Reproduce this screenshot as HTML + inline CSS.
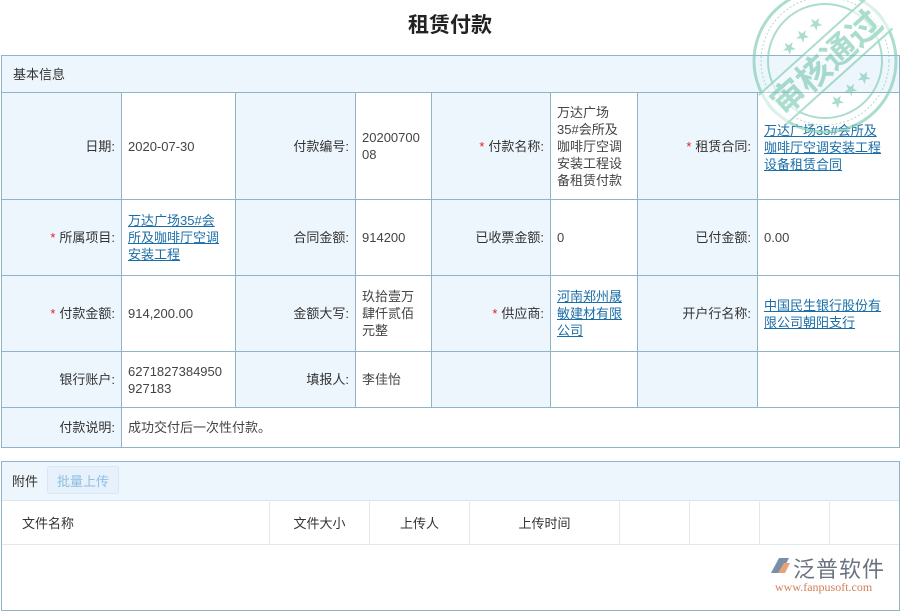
<!DOCTYPE html>
<html><head><meta charset="utf-8"><style>
body{margin:0;width:900px;height:600px;background:#fff;position:relative;overflow:hidden;font-family:"Liberation Sans","Noto Sans CJK SC",sans-serif;font-size:13px;color:#333}
.c{position:absolute;box-sizing:border-box;border:1px solid #8fb3c7;display:flex;align-items:center;line-height:17px}
.l{background:#eef6fd;justify-content:flex-end;padding-right:6px;text-align:right}
.v{background:#fff;padding-left:6px;padding-right:4px;color:#444}
.s{color:#e02020;margin-right:4px}
a{color:#1a6ea8;text-decoration:underline}
.h{position:absolute;top:500px;height:45px;box-sizing:border-box;border-right:1px solid #e3e8ec;display:flex;align-items:center;justify-content:center;font-size:13px}
</style></head><body>
<div style="position:absolute;left:0;top:9px;width:900px;text-align:center;font-size:21px;font-weight:bold;color:#222">租赁付款</div>

<div class="c l" style="left:1px;top:55px;width:899px;height:38px;justify-content:flex-start;padding-left:11px">基本信息</div>

<div class="c l" style="left:1px;top:92px;width:121px;height:108px">日期:</div>
<div class="c v" style="left:121px;top:92px;width:115px;height:108px">2020-07-30</div>
<div class="c l" style="left:235px;top:92px;width:121px;height:108px">付款编号:</div>
<div class="c v" style="left:355px;top:92px;width:77px;height:108px">20200700<br>08</div>
<div class="c l" style="left:431px;top:92px;width:120px;height:108px"><span class="s">*</span>付款名称:</div>
<div class="c v" style="left:550px;top:92px;width:88px;height:108px">万达广场<br>35#会所及<br>咖啡厅空调<br>安装工程设<br>备租赁付款</div>
<div class="c l" style="left:637px;top:92px;width:121px;height:108px"><span class="s">*</span>租赁合同:</div>
<div class="c v" style="left:757px;top:92px;width:143px;height:108px;align-items:flex-start;padding-top:29px"><a>万达广场35#会所及<br>咖啡厅空调安装工程<br>设备租赁合同</a></div>

<div class="c l" style="left:1px;top:199px;width:121px;height:77px"><span class="s">*</span>所属项目:</div>
<div class="c v" style="left:121px;top:199px;width:115px;height:77px"><a>万达广场35#会<br>所及咖啡厅空调<br>安装工程</a></div>
<div class="c l" style="left:235px;top:199px;width:121px;height:77px">合同金额:</div>
<div class="c v" style="left:355px;top:199px;width:77px;height:77px">914200</div>
<div class="c l" style="left:431px;top:199px;width:120px;height:77px">已收票金额:</div>
<div class="c v" style="left:550px;top:199px;width:88px;height:77px">0</div>
<div class="c l" style="left:637px;top:199px;width:121px;height:77px">已付金额:</div>
<div class="c v" style="left:757px;top:199px;width:143px;height:77px">0.00</div>

<div class="c l" style="left:1px;top:275px;width:121px;height:77px"><span class="s">*</span>付款金额:</div>
<div class="c v" style="left:121px;top:275px;width:115px;height:77px">914,200.00</div>
<div class="c l" style="left:235px;top:275px;width:121px;height:77px">金额大写:</div>
<div class="c v" style="left:355px;top:275px;width:77px;height:77px">玖拾壹万<br>肆仟贰佰<br>元整</div>
<div class="c l" style="left:431px;top:275px;width:120px;height:77px"><span class="s">*</span>供应商:</div>
<div class="c v" style="left:550px;top:275px;width:88px;height:77px"><a>河南郑州晟<br>敏建材有限<br>公司</a></div>
<div class="c l" style="left:637px;top:275px;width:121px;height:77px">开户行名称:</div>
<div class="c v" style="left:757px;top:275px;width:143px;height:77px"><a>中国民生银行股份有<br>限公司朝阳支行</a></div>

<div class="c l" style="left:1px;top:351px;width:121px;height:57px">银行账户:</div>
<div class="c v" style="left:121px;top:351px;width:115px;height:57px">6271827384950<br>927183</div>
<div class="c l" style="left:235px;top:351px;width:121px;height:57px">填报人:</div>
<div class="c v" style="left:355px;top:351px;width:77px;height:57px">李佳怡</div>
<div class="c l" style="left:431px;top:351px;width:120px;height:57px"></div>
<div class="c v" style="left:550px;top:351px;width:88px;height:57px"></div>
<div class="c l" style="left:637px;top:351px;width:121px;height:57px"></div>
<div class="c v" style="left:757px;top:351px;width:143px;height:57px"></div>

<div class="c l" style="left:1px;top:407px;width:121px;height:41px">付款说明:</div>
<div class="c v" style="left:121px;top:407px;width:779px;height:41px">成功交付后一次性付款。</div>

<div style="position:absolute;left:1px;top:461px;width:899px;height:150px;box-sizing:border-box;border:1px solid #8fb3c7"></div>
<div style="position:absolute;left:2px;top:462px;width:897px;height:38px;background:#eef6fd;border-bottom:1px solid #dde5eb"></div>
<div style="position:absolute;left:12px;top:471px">附件</div>
<div style="position:absolute;left:47px;top:466px;width:72px;height:28px;box-sizing:border-box;border:1px solid #d6e6f3;border-radius:3px;background:#e6f1fb;color:#8cbfe4;display:flex;align-items:center;justify-content:center">批量上传</div>
<div class="h" style="left:2px;width:268px;justify-content:flex-start;padding-left:20px">文件名称</div>
<div class="h" style="left:270px;width:100px">文件大小</div>
<div class="h" style="left:370px;width:100px">上传人</div>
<div class="h" style="left:470px;width:150px">上传时间</div>
<div class="h" style="left:620px;width:70px"></div>
<div class="h" style="left:690px;width:70px"></div>
<div class="h" style="left:760px;width:70px"></div>
<div style="position:absolute;left:2px;top:544px;width:897px;height:1px;background:#e3e8ec"></div>

<div style="position:absolute;left:769px;top:555px;width:22px;height:22px">
<svg width="22" height="22"><path d="M2 18 L10 3 L20 3 L12 18Z" fill="#7a8ea8"/><path d="M9 18 L15 8 L21 8 L16 18Z" fill="#e8a27a"/></svg></div>
<div style="position:absolute;left:793px;top:552px;font-size:22px;color:#6b7380;letter-spacing:1px">泛普软件</div>
<div style="position:absolute;left:775px;top:580px;font-family:'Liberation Serif',serif;font-size:12px;color:#d0805a">www.fanpusoft.com</div>

<svg style="position:absolute;left:745px;top:-12px;opacity:.65" width="160" height="150" viewBox="0 0 160 150">
<g fill="none" stroke="#7fcbb4">
<circle cx="80" cy="73" r="71" stroke-width="3"/>
<circle cx="80" cy="73" r="64" stroke-width="1" stroke-dasharray="2 2"/>
<circle cx="80" cy="73" r="57" stroke-width="2"/>
</g>
<g transform="rotate(-42 80 73)">
<rect x="8" y="55" width="144" height="38" fill="#fff" opacity=".6"/>
<line x1="8" y1="54" x2="152" y2="54" stroke="#7fcbb4" stroke-width="2"/>
<line x1="8" y1="94" x2="152" y2="94" stroke="#7fcbb4" stroke-width="2"/>
<text x="80" y="87" text-anchor="middle" font-size="34" font-weight="bold" fill="#7fcbb4" font-family="Noto Sans CJK SC,sans-serif">审核通过</text>
<text x="80" y="44" text-anchor="middle" font-size="14" fill="#7fcbb4">★ ★ ★</text>
<text x="80" y="116" text-anchor="middle" font-size="14" fill="#7fcbb4">★ ★ ★</text>
</g>
</svg>
</body></html>
